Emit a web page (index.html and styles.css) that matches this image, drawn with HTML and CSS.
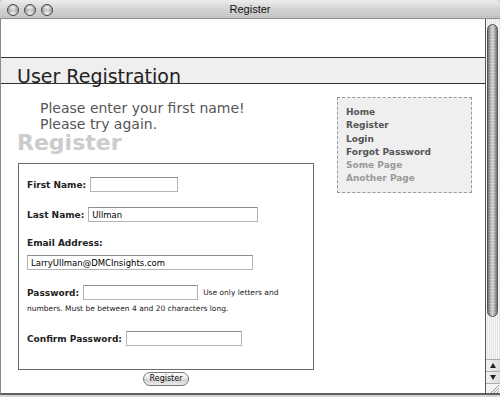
FILE: index.html
```html
<!DOCTYPE html>
<html lang="en">
<head>
    <meta charset="UTF-8">
    <title>Register</title>
    <link rel="stylesheet" href="styles.css">
</head>
<body>
    <div class="window">
        <div class="titlebar">
            <div class="lights">
                <span class="light"></span>
                <span class="light"></span>
                <span class="light"></span>
            </div>
            <div class="title">Register</div>
        </div>

        <div class="viewport">
            <div class="page">
                <div class="banner">
                    <h1>User Registration</h1>
                </div>

                <div class="columns">
                    <div class="main">
                        <p class="error">Please enter your first name!<br>Please try again.</p>
                        <h2>Register</h2>

                        <form class="form-box">
                            <div class="row first">
                                <label for="first_name">First Name:</label>
                                <input type="text" id="first_name" class="w-first">
                            </div>
                            <div class="row">
                                <label for="last_name">Last Name:</label>
                                <input type="text" id="last_name" class="w-last" value="Ullman">
                            </div>
                            <div class="label-line">
                                <label for="email">Email Address:</label>
                            </div>
                            <div class="row tight">
                                <input type="text" id="email" class="w-email" value="LarryUllman@DMCInsights.com">
                            </div>
                            <div class="password">
                                <div class="row pass-row">
                                    <label for="password1">Password:</label>
                                    <input type="password" id="password1" class="w-pass">
                                    <small>Use only letters and</small>
                                </div>
                                <small class="help-more">numbers. Must be between 4 and 20 characters long.</small>
                            </div>
                            <div class="row confirm">
                                <label for="password2">Confirm Password:</label>
                                <input type="password" id="password2" class="w-confirm">
                            </div>
                        </form>

                        <div class="submit">
                            <button type="button">Register</button>
                        </div>
                    </div>

                    <div class="sidebar">
                        <a href="#">Home</a>
                        <a href="#">Register</a>
                        <a href="#">Login</a>
                        <a href="#">Forgot Password</a>
                        <a href="#" class="muted">Some Page</a>
                        <a href="#" class="muted">Another Page</a>
                    </div>
                </div>
            </div>

            <div class="scrollbar">
                <div class="track"><div class="thumb"></div></div>
                <div class="arrow"><span class="tri up"></span></div>
                <div class="arrow"><span class="tri down"></span></div>
                <div class="grip">
                    <svg width="14" height="10" viewBox="0 0 14 10">
                        <path d="M4 10 L13 1 M7 10 L13 4 M10 10 L13 7" stroke="#999" stroke-width="1" fill="none"/>
                    </svg>
                </div>
            </div>
        </div>
    </div>
</body>
</html>
```

FILE: styles.css
```css
body {
    margin: 0;
    background: #fff;
    font-family: "DejaVu Sans", Verdana, sans-serif;
}
.window {
    width: 500px;
    height: 397px;
    overflow: hidden;
    background: #d6d6d6;
}

/* title bar */
.titlebar {
    position: relative;
    height: 18px;
    border-bottom: 1px solid #8c8c8c;
    border-radius: 5px 5px 0 0;
    background:
        repeating-linear-gradient(0deg, rgba(255,255,255,0.18) 0 1px, transparent 1px 2px),
        linear-gradient(#ececec, #cfcfcf 50%, #bdbdbd);
}
.lights {
    display: flex;
    gap: 5px;
    padding: 4px 0 0 7px;
}
.light {
    width: 10px;
    height: 10px;
    border-radius: 50%;
    border: 1px solid #4a4a4a;
    background:
        radial-gradient(ellipse 60% 35% at 50% 22%, rgba(255,255,255,0.95), rgba(255,255,255,0) 100%),
        radial-gradient(circle at 50% 85%, #f2f2f2 0, #b5b5b5 45%, #6c6c6c 100%);
}
.title {
    position: absolute;
    top: 0;
    left: 0;
    right: 0;
    text-align: center;
    font-family: "Liberation Sans", Arial, sans-serif;
    font-size: 11px;
    line-height: 18px;
    color: #111;
}

/* content */
.viewport {
    display: flex;
    height: 374px;
    border-left: 1px solid #8a8a8a;
    border-bottom: 2px solid #5e5e5e;
}
.page {
    flex: 1;
    background: #fff;
    padding-top: 38px;
}
.banner {
    height: 25px;
    background: #efefef;
    border-top: 1px solid #333;
    border-bottom: 1px solid #333;
}
.banner h1 {
    margin: 0;
    padding: 9px 0 0 16px;
    font-size: 19px;
    line-height: 19px;
    font-weight: normal;
    color: #222;
}
.columns {
    display: flex;
}
.main {
    width: 320px;
    padding-left: 16px;
}
.error {
    margin: 16px 0 0 23px;
    font-size: 14px;
    line-height: 16px;
    color: #555;
}
.main h2 {
    margin: 0;
    font-size: 22px;
    line-height: 22px;
    color: #ccc;
}

/* form */
.form-box {
    width: 296px;
    box-sizing: border-box;
    margin: 9px 0 0 1px;
    padding: 0 8px 23px 8px;
    border: 1px solid #6a6a6a;
}
label {
    font-size: 9px;
    font-weight: bold;
    color: #222;
}
input[type="text"], input[type="password"] {
    height: 15px;
    box-sizing: border-box;
    margin: 0;
    padding: 0 3px;
    border: 1px solid #b4b4b4;
    border-top-color: #8e8e8e;
    font-family: "DejaVu Sans", Verdana, sans-serif;
    font-size: 8.5px;
    color: #000;
}
.row {
    display: flex;
    align-items: center;
    height: 15px;
    margin-top: 15px;
}
.row label {
    margin-right: 4px;
}
.row.first {
    margin-top: 13px;
}
.row.tight {
    margin-top: 5px;
}
.row.confirm {
    margin-top: 14px;
}
.label-line {
    margin-top: 15px;
    font-size: 9px;
    line-height: 13px;
}
.w-first { width: 88px; }
.w-last { width: 170px; }
.w-email { width: 226px; }
.w-pass { width: 115px; margin-right: 5px !important; }
.w-confirm { width: 116px; }
.password {
    margin-top: 15px;
}
.password .row {
    margin-top: 0;
}
.password small {
    font-size: 7.5px;
    color: #222;
}
.password .help-more {
    display: block;
    margin-top: 1px;
    line-height: 16px;
}
.submit {
    width: 296px;
    display: flex;
    justify-content: center;
    margin: 2px 0 0 1px;
}
.submit button {
    height: 14px;
    width: 46px;
    padding: 0;
    border: 1px solid #777;
    border-radius: 7px;
    background: linear-gradient(#fdfdfd, #e6e6e6 50%, #cfcfcf 51%, #ececec);
    font-family: "DejaVu Sans", Verdana, sans-serif;
    font-size: 8px;
    line-height: 12px;
    color: #111;
}

/* sidebar */
.sidebar {
    width: 135px;
    box-sizing: border-box;
    margin-top: 13px;
    align-self: flex-start;
    padding: 8px 8px 6px 8px;
    background: #efefef;
    border: 1px dashed #999;
}
.sidebar a {
    display: block;
    font-size: 9px;
    font-weight: bold;
    line-height: 13.3px;
    color: #555;
    text-decoration: none;
}
.sidebar a.muted {
    color: #999;
}

/* scrollbar */
.scrollbar {
    width: 14px;
    display: flex;
    flex-direction: column;
    border-left: 1px solid #555;
    background: repeating-linear-gradient(90deg, #f6f6f6 0 1px, #e4e4e4 1px 2px);
}
.track {
    flex: 1;
    padding-top: 5px;
}
.thumb {
    width: 11px;
    height: 293px;
    margin-left: 1px;
    border-radius: 6px;
    box-sizing: border-box;
    border: 1px solid #555;
    background:
        repeating-linear-gradient(0deg, rgba(255,255,255,0.15) 0 1px, transparent 1px 3px),
        linear-gradient(90deg, #6a6a6a, #a9a9a9 25%, #d2d2d2 50%, #a4a4a4 75%, #6a6a6a);
}
.arrow {
    height: 11px;
    border-top: 1px solid #aaa;
    display: flex;
    align-items: center;
    justify-content: center;
    background: linear-gradient(90deg, #f2f2f2, #dcdcdc);
}
.tri {
    width: 0;
    height: 0;
    border-left: 3px solid transparent;
    border-right: 3px solid transparent;
}
.tri.up {
    border-bottom: 5px solid #222;
}
.tri.down {
    border-top: 5px solid #222;
}
.grip {
    height: 9px;
    border-top: 1px solid #aaa;
    background: #f4f4f4;
    overflow: hidden;
}
.grip svg {
    display: block;
}
```
